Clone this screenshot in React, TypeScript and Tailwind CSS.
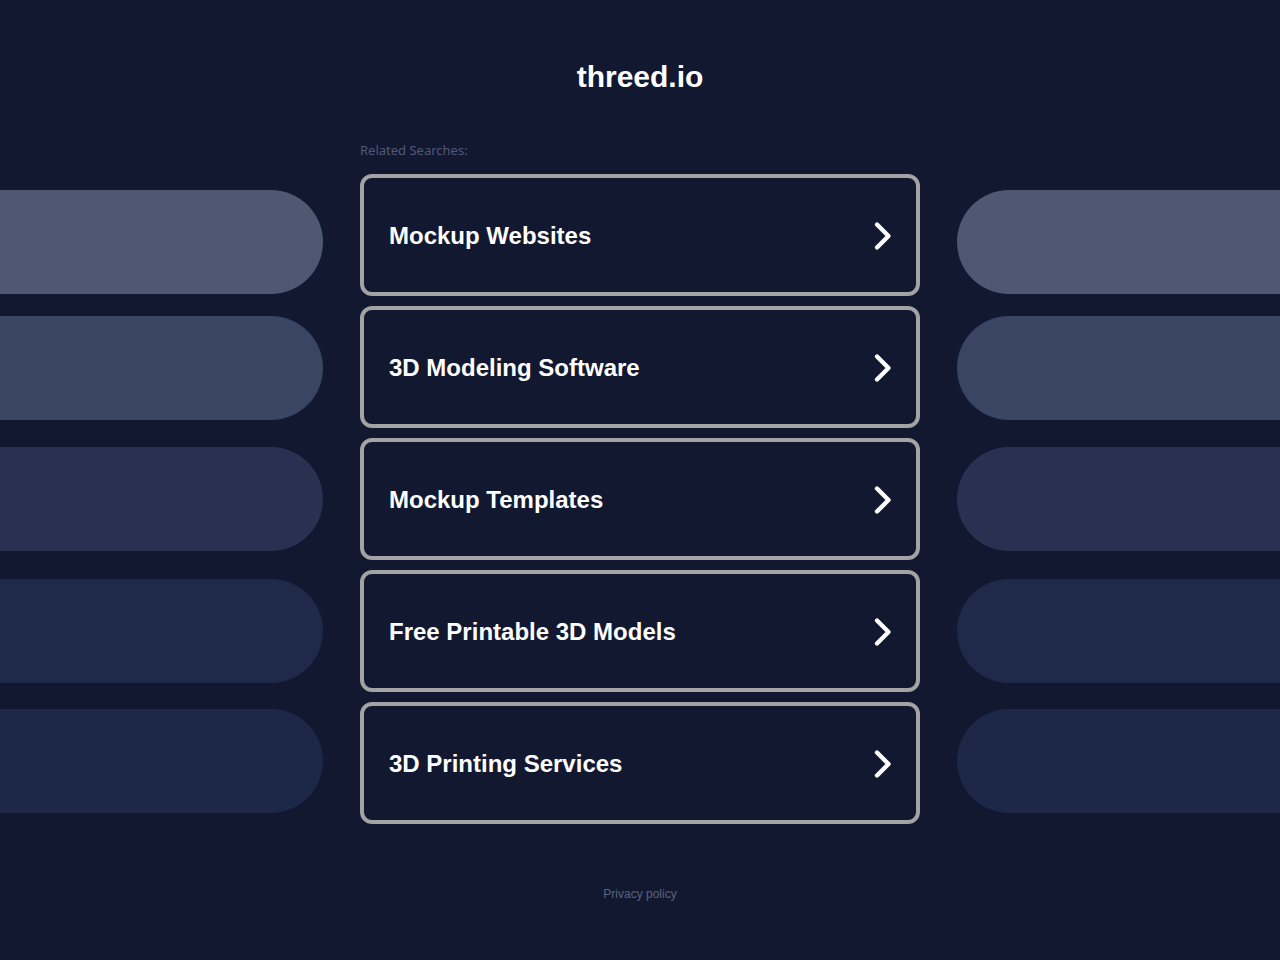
import React from "react";

const rows = [
  { label: "Mockup Websites", pill: "bg-[#4e5873]", mt: "mt-[16px]" },
  { label: "3D Modeling Software", pill: "bg-[#3a4463]", mt: "mt-[10px]" },
  { label: "Mockup Templates", pill: "bg-[#283152]", mt: "mt-[9px]" },
  { label: "Free Printable 3D Models", pill: "bg-[#1f2949]", mt: "mt-[9px]" },
  { label: "3D Printing Services", pill: "bg-[#1d2747]", mt: "mt-[7px]" },
];

function Chevron() {
  return (
    <svg width="22" height="30" viewBox="0 0 22 30" fill="none" className="shrink-0">
      <path d="M5 3.5 L16.5 15 L5 26.5" stroke="white" strokeWidth="4.4" strokeLinecap="round" strokeLinejoin="round" />
    </svg>
  );
}

export default function App() {
  return (
    <div className="min-h-[960px] w-full bg-[#121830] font-['Liberation_Sans',Arial,sans-serif] overflow-hidden">
      <div className="pt-[59px] text-center">
        <h1 className="text-[30px] leading-[36px] font-bold text-white">threed.io</h1>
      </div>
      <div className="mt-[47px] grid grid-cols-[1fr_560px_1fr] gap-x-[37px]">
        <div />
        <div className="text-[13px] leading-[16px] text-[#4f5879] font-['Noto_Sans',sans-serif]">Related Searches:</div>
        <div />
      </div>
      <div className="mt-[16px] flex flex-col gap-[10px]">
        {rows.map((r) => (
          <div key={r.label} className="grid grid-cols-[1fr_560px_1fr] gap-x-[37px] h-[122px]">
            <div className={`${r.mt} h-[104px] rounded-r-[52px] ${r.pill}`} />
            <a
              href="#"
              className="h-[122px] rounded-[12px] border-[4px] border-[#a3a3a6] flex items-center justify-between pl-[25px] pr-[22px] pt-[2px]"
            >
              <span className="text-[24px] font-bold text-white">{r.label}</span>
              <Chevron />
            </a>
            <div className={`${r.mt} h-[104px] rounded-l-[52px] ${r.pill}`} />
          </div>
        ))}
      </div>
      <div className="mt-[62px] text-center text-[12px] leading-[16px] text-[#5a6281]">Privacy policy</div>
    </div>
  );
}
